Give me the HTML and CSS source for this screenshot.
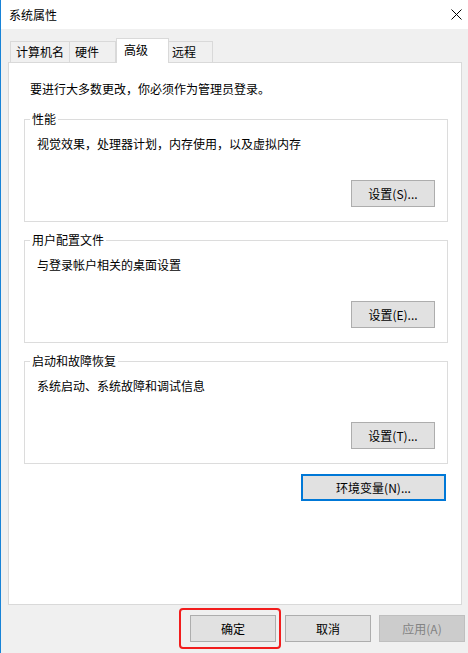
FILE: index.html
```html
<!DOCTYPE html>
<html lang="zh-CN">
<head>
  <meta charset="UTF-8" />
  <meta name="viewport" content="width=device-width, initial-scale=1.0" />
  <title>系统属性</title>
  <link rel="stylesheet" href="styles.css">
</head>
<body>
  <div class="window">
    <div class="titlebar">
      <span class="title">系统属性</span>
      <svg class="close" width="11" height="11" viewBox="0 0 11 11">
        <path d="M0.5 0.5 L10.5 10.5 M10.5 0.5 L0.5 10.5" stroke="#000" stroke-width="1" fill="none" />
      </svg>
    </div>
    <div class="content">
      <div class="tabs">
        <div class="tab">计算机名</div>
        <div class="tab">硬件</div>
        <div class="tab active">高级</div>
        <div class="tab">远程</div>
      </div>
      <div class="panel">
        <p class="notice">要进行大多数更改，你必须作为管理员登录。</p>

        <fieldset class="group">
          <legend>性能</legend>
          <p class="desc">视觉效果，处理器计划，内存使用，以及虚拟内存</p>
          <div class="group-actions"><button class="btn">设置(S)...</button></div>
        </fieldset>

        <fieldset class="group">
          <legend>用户配置文件</legend>
          <p class="desc">与登录帐户相关的桌面设置</p>
          <div class="group-actions"><button class="btn">设置(E)...</button></div>
        </fieldset>

        <fieldset class="group">
          <legend>启动和故障恢复</legend>
          <p class="desc">系统启动、系统故障和调试信息</p>
          <div class="group-actions"><button class="btn">设置(T)...</button></div>
        </fieldset>

        <div class="env-row"><button class="btn btn-focus">环境变量(N)...</button></div>
      </div>
      <div class="footer">
        <span class="highlight"><button class="btn btn-wide">确定</button></span>
        <button class="btn btn-wide cancel">取消</button>
        <button class="btn btn-wide" disabled>应用(A)</button>
      </div>
    </div>
  </div>
</body>
</html>
```

FILE: styles.css
```css
* { box-sizing: border-box; }
html, body {
  margin: 0;
  height: 100%;
}
body {
  font-family: "Noto Sans CJK SC", "Noto Sans", sans-serif;
  font-size: 12px;
  line-height: 16px;
  color: #000;
  background: #f0f0f0;
}
.window {
  width: 468px;
  height: 653px;
  border-left: 1px solid #1883d7;
  background: #f0f0f0;
}
.titlebar {
  height: 29px;
  background: #fff;
  display: flex;
  align-items: center;
  justify-content: space-between;
  padding: 0 6px 0 8px;
}
.close {
  margin-top: -1px;
}
.content {
  padding: 9px 0 0 7px;
}
.tabs {
  display: flex;
  align-items: flex-end;
  height: 24px;
  padding-left: 2px;
}
.tab {
  height: 21px;
  min-width: 47px;
  padding: 2px 5px 0;
  border: 1px solid #d9d9d9;
  border-bottom: 0;
  margin-left: -1px;
  background: #f0f0f0;
  white-space: nowrap;
}
.tab:first-child {
  margin-left: 0;
}
.tab.active {
  align-self: flex-start;
  height: 25px;
  min-width: 53px;
  padding: 3px 7px 0;
  margin: 0 -2px 0 0;
  background: #fff;
  position: relative;
  z-index: 1;
}
.panel {
  width: 454px;
  height: 543px;
  background: #fff;
  border: 1px solid #d9d9d9;
  padding: 18px 13px 0 15px;
}
.notice {
  margin: 0 0 14px 6px;
}
.group {
  margin: 0 0 10px 0;
  padding: 0 0 14px 0;
  border: 1px solid #dcdcdc;
  min-inline-size: 0;
}
.group legend {
  margin-left: 5px;
  padding: 0 2px;
}
.desc {
  margin: 9px 0 0 12px;
}
.group-actions {
  display: flex;
  justify-content: flex-end;
  margin-top: 28px;
  padding-right: 12px;
}
.btn {
  font: inherit;
  color: #000;
  height: 27px;
  width: 84px;
  padding: 0;
  background: #e1e1e1;
  border: 1px solid #adadad;
}
.env-row {
  display: flex;
  justify-content: flex-end;
  padding-right: 2px;
  margin-top: 9px;
}
.btn-focus {
  width: 145px;
  border: 2px solid #0078d7;
}
.footer {
  display: flex;
  justify-content: flex-end;
  align-items: center;
  padding: 3px 3px 0 0;
}
.btn-wide {
  width: 86px;
}
.highlight {
  display: flex;
  padding: 5px 3px 5px 9px;
  border: 2px solid #f21d1d;
  border-radius: 4px;
  margin-right: 4px;
}
.cancel {
  margin-right: 8px;
}
.btn[disabled] {
  background: #cccccc;
  border-color: #bfbfbf;
  color: #838383;
}
```
